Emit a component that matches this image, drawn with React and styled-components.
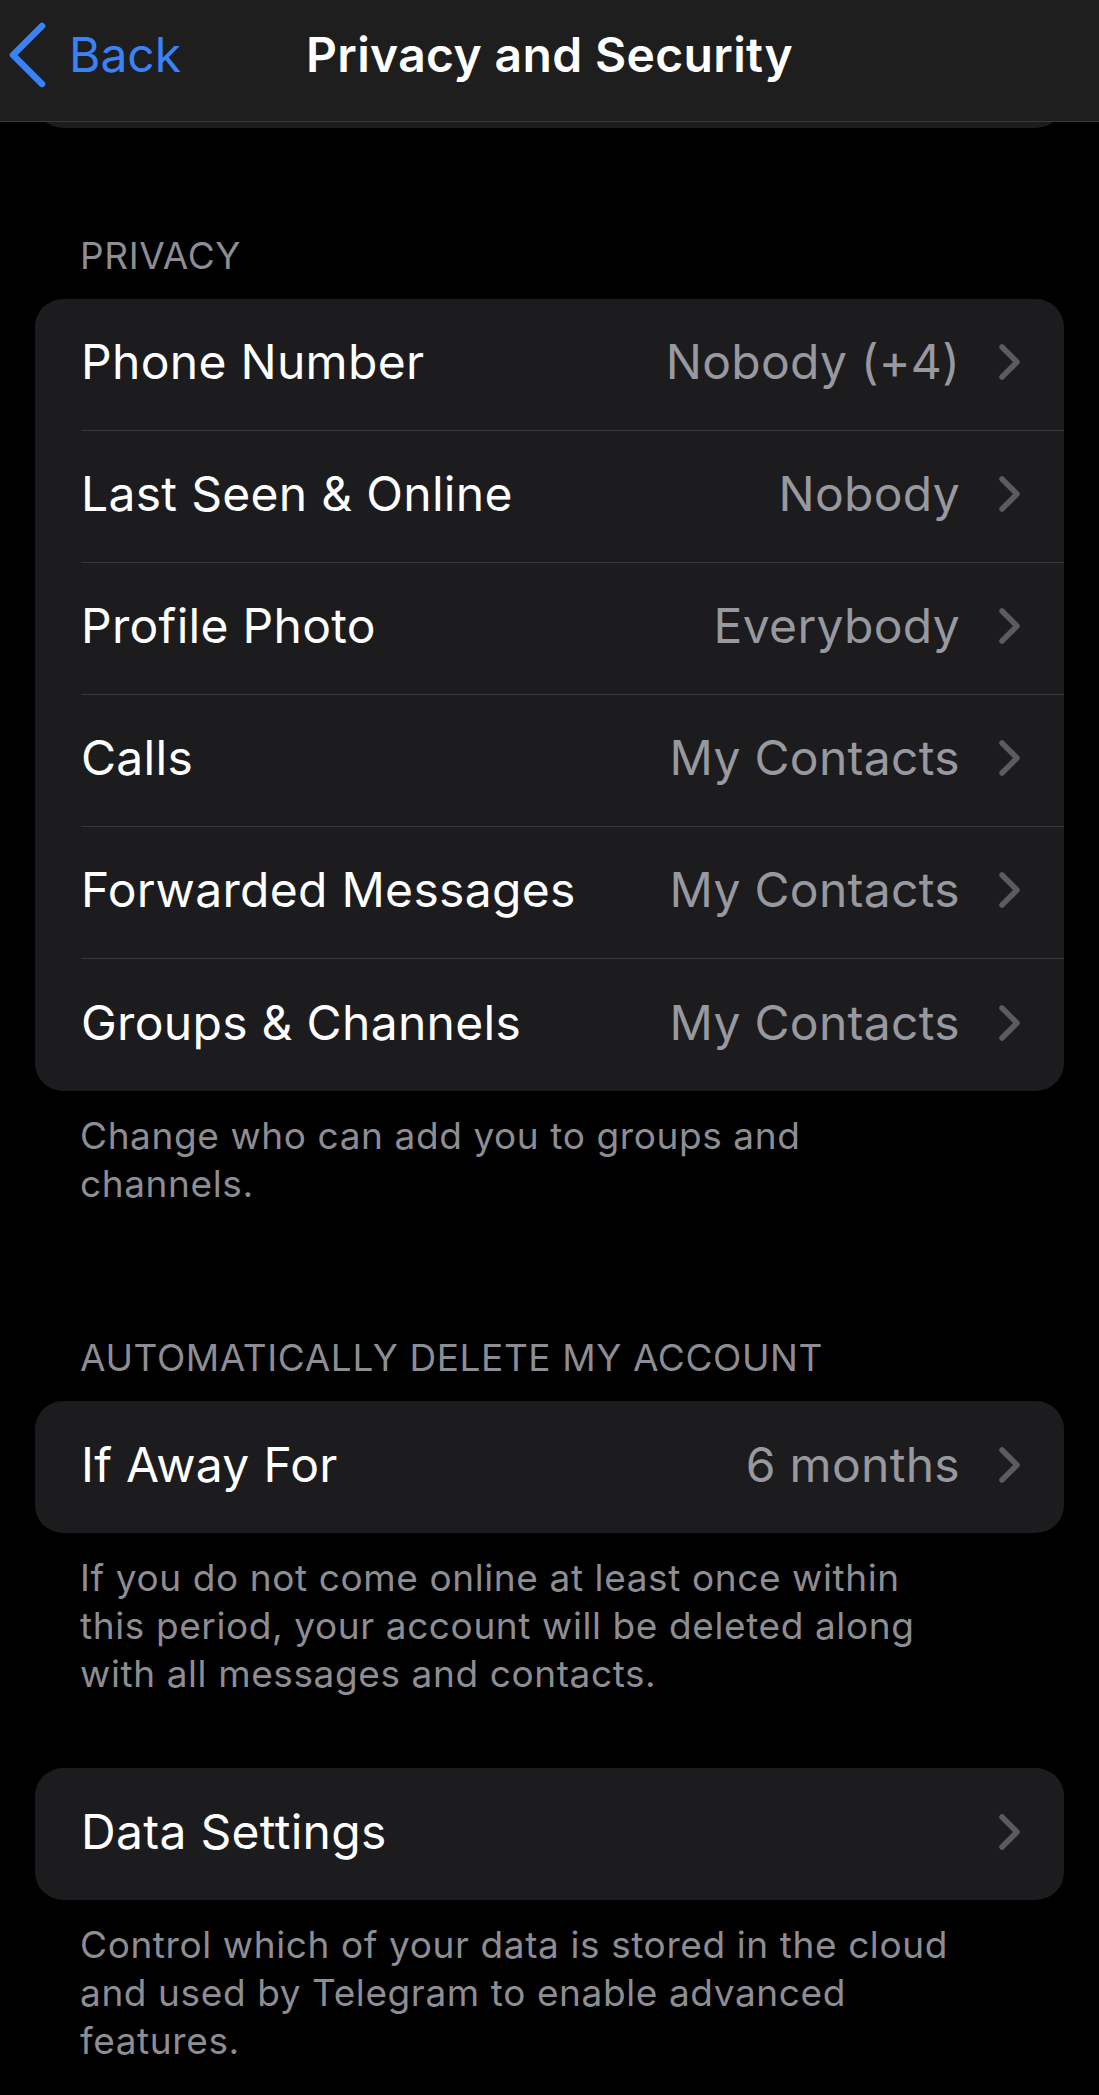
import React from "react";
import styled, { createGlobalStyle } from "styled-components";

const GlobalStyle = createGlobalStyle`
  html, body { margin: 0; padding: 0; background: #000; }
  body { font-family: Inter, "Noto Sans", "Liberation Sans", sans-serif; -webkit-font-smoothing: antialiased; }
  * { box-sizing: border-box; }
`;

const Page = styled.div`
  position: relative;
  width: 1099px;
  min-height: 2095px;
  background: #000;
  overflow: hidden;
`;

const NavBar = styled.header`
  position: absolute;
  top: 0;
  left: 0;
  right: 0;
  z-index: 2;
  height: 122px;
  padding: 0 0 11px 0;
  background: #1e1e1e;
  border-bottom: 1px solid #3a3a3c;
  display: grid;
  grid-template-columns: 1fr auto 1fr;
  align-items: center;
`;

const BackButton = styled.button`
  justify-self: start;
  display: flex;
  align-items: center;
  gap: 22px;
  padding: 0 0 0 7px;
  border: 0;
  background: none;
  color: #3a82f7;
  font-family: inherit;
  font-size: 48px;
  line-height: 58px;
  cursor: pointer;
`;

const Title = styled.h1`
  margin: 0;
  color: #fff;
  font-size: 48px;
  font-weight: 600;
  line-height: 58px;
  letter-spacing: 0.35px;
`;

const Content = styled.main`
  display: flex;
  flex-direction: column;
  padding: 0 35px 0 35px;
`;

const Card = styled.section`
  background: #1c1c1e;
  border-radius: 28px;
  overflow: hidden;
  margin-top: ${(p) => p.$top || 0}px;
`;

const HiddenCard = styled(Card)`
  height: 128px;
  border-radius: 0 0 28px 28px;
`;

const SectionHeader = styled.h2`
  margin: ${(p) => p.$top}px 0 21px 0;
  padding-left: 45px;
  color: #8d8d93;
  font-size: 37px;
  font-weight: 400;
  line-height: 44px;
  letter-spacing: 0.6px;
  text-transform: uppercase;
`;

const Footer = styled.p`
  margin: 21px 0 0 0;
  padding-left: 45px;
  max-width: 930px;
  color: #8d8d93;
  font-size: 37px;
  line-height: 48px;
  letter-spacing: 0.6px;
`;

const Row = styled.div`
  height: 132px;
  padding-left: 46px;
  display: flex;
`;

const RowInner = styled.div`
  flex: 1;
  display: flex;
  align-items: center;
  padding: 0 44px 5px 0;
  border-bottom: ${(p) => (p.$last ? "0" : "1px solid #38383a")};
`;

const Label = styled.span`
  flex: 1;
  color: #fff;
  font-size: 48px;
  line-height: 58px;
  letter-spacing: 0.3px;
`;

const Value = styled.span`
  color: #98989f;
  font-size: 48px;
  line-height: 58px;
  letter-spacing: 0.3px;
  margin-right: 39px;
`;

const Chevron = () => (
  <svg width="21" height="36" viewBox="0 0 21 36" fill="none">
    <polyline
      points="3,3 18,18 3,33"
      stroke="#5c5c60"
      strokeWidth="5.5"
      strokeLinecap="round"
      strokeLinejoin="round"
    />
  </svg>
);

const BackChevron = () => (
  <svg width="40" height="66" viewBox="0 0 40 66" fill="none">
    <polyline
      points="35,4 6,33 35,62"
      stroke="#3a82f7"
      strokeWidth="6.5"
      strokeLinecap="round"
      strokeLinejoin="round"
    />
  </svg>
);

const SettingsRow = ({ label, value, last }) => (
  <Row>
    <RowInner $last={last}>
      <Label>{label}</Label>
      {value && <Value>{value}</Value>}
      <Chevron />
    </RowInner>
  </Row>
);

const privacy = [
  ["Phone Number", "Nobody (+4)"],
  ["Last Seen & Online", "Nobody"],
  ["Profile Photo", "Everybody"],
  ["Calls", "My Contacts"],
  ["Forwarded Messages", "My Contacts"],
  ["Groups & Channels", "My Contacts"],
];

export default function App() {
  return (
    <Page>
      <GlobalStyle />
      <NavBar>
        <BackButton>
          <BackChevron />
          Back
        </BackButton>
        <Title>Privacy and Security</Title>
        <div />
      </NavBar>
      <Content>
        <HiddenCard />
        <SectionHeader $top={106}>Privacy</SectionHeader>
        <Card>
          {privacy.map(([l, v], i) => (
            <SettingsRow key={l} label={l} value={v} last={i === privacy.length - 1} />
          ))}
        </Card>
        <Footer>Change who can add you to groups and channels.</Footer>
        <SectionHeader $top={128}>Automatically delete my account</SectionHeader>
        <Card>
          <SettingsRow label="If Away For" value="6 months" last />
        </Card>
        <Footer>
          If you do not come online at least once within this period, your account will be deleted along with all messages and contacts.
        </Footer>
        <Card $top={70}>
          <SettingsRow label="Data Settings" last />
        </Card>
        <Footer>
          Control which of your data is stored in the cloud and used by Telegram to enable advanced features.
        </Footer>
      </Content>
    </Page>
  );
}
